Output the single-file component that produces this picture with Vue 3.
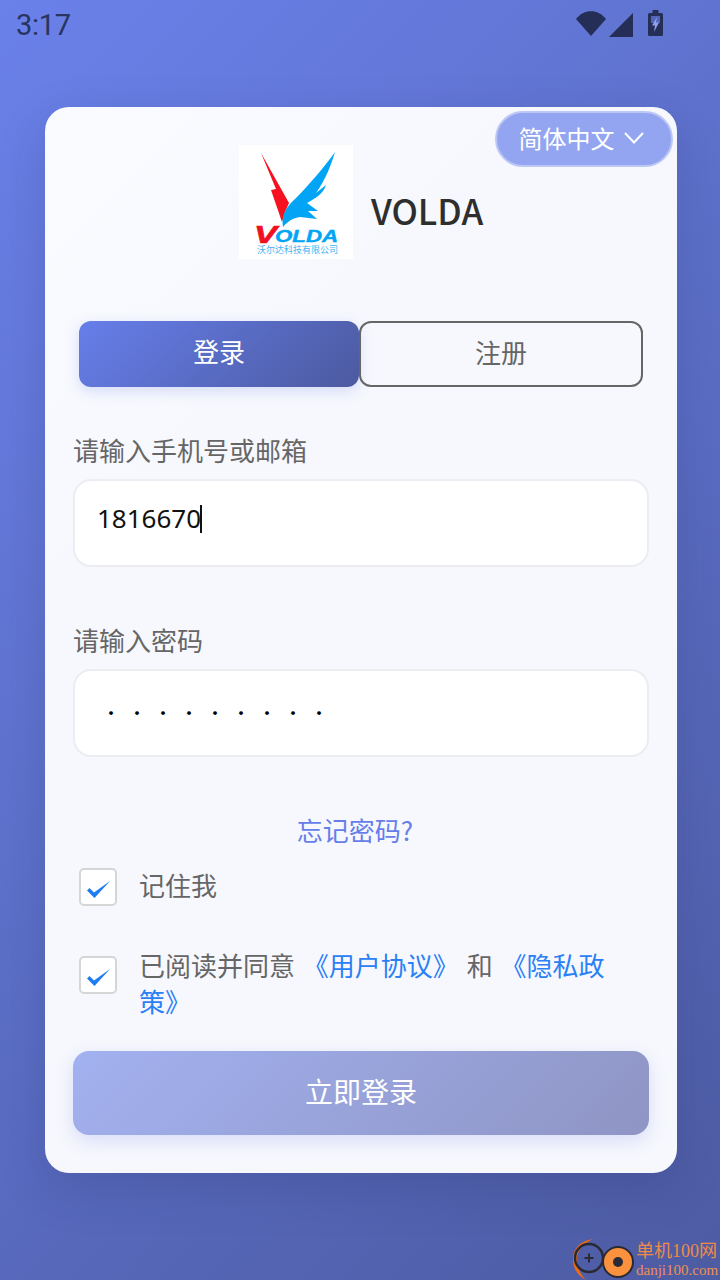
<script setup>
const dots = '·········'
</script>

<template>
  <div class="page">
    <div class="status">
      <span class="time">3:17</span>
      <div class="sysicons">
        <svg class="wifi" width="30" height="25" viewBox="0 0 30 25"><path d="M0 8 C8 -2.500 22 -2.500 30 8 L15 25 Z" fill="#252e57"/></svg>
        <svg class="signal" width="24" height="24" viewBox="0 0 24 24"><path d="M24 0 V24 H0 Z" fill="#252e57"/></svg>
        <svg class="batt" width="15" height="26" viewBox="0 0 15 26"><path d="M4.500 0 H10.500 V3 H13.500 Q15 3 15 4.500 V24.500 Q15 26 13.500 26 H1.500 Q0 26 0 24.500 V4.500 Q0 3 1.500 3 H4.500 Z" fill="#252e57"/><path d="M3 6 H12 V13 H3 Z" fill="#6478d8" opacity=".75"/><path d="M9 7 L4 15.500 H7 L6 22 L11 12.500 H8 Z" fill="#8fa0ee"/></svg>
      </div>
    </div>

    <main class="card">
      <button class="lang">
        <span>简体中文</span>
        <svg width="20" height="12" viewBox="0 0 20 12"><path d="M1 1 L10 10.500 L19 1" fill="none" stroke="#fff" stroke-width="2"/></svg>
      </button>

      <header class="brand">
        <div class="logo">
          <svg width="114" height="114" viewBox="0 0 114 114">
            <path d="M22 8 L50 58 L46 67 L43 77 L32 45 L37 44 Z" fill="#f5111f"/>
            <path d="M96 7 C84 24 68 42 55 55 C47 62 42 71 44 82 C50 75 55 73 61 72 L78 74 L69 66 L79 66 L68 58 C77 53 84 49 87 40 L77 48 C87 34 92 20 96 7 Z" fill="#02a5f5"/>
            <text class="logo-v" x="15" y="98" textLength="23" lengthAdjust="spacingAndGlyphs">V</text>
            <text class="logo-w" x="36" y="97" textLength="63" lengthAdjust="spacingAndGlyphs">OLDA</text>
            <text class="logo-cn" x="18" y="108">沃尔达科技有限公司</text>
          </svg>
        </div>
        <h1>VOLDA</h1>
      </header>

      <div class="tabs">
        <div class="tab active">登录</div>
        <div class="tab">注册</div>
      </div>

      <label class="label">请输入手机号或邮箱</label>
      <div class="field"><span class="value">1816670</span><i class="caret"></i></div>

      <label class="label second">请输入密码</label>
      <div class="field pass"><span class="dots">{{ dots }}</span></div>

      <a class="forgot">忘记密码?</a>

      <div class="check remember">
        <span class="box"><svg width="26" height="20" viewBox="0 0 26 20"><path d="M2 11.500 L4.500 9 L9 13.500 L25 2 L9.500 19 Z" fill="#1f7cf2"/></svg></span>
        <span class="txt">记住我</span>
      </div>
      <div class="check agree">
        <span class="box"><svg width="26" height="20" viewBox="0 0 26 20"><path d="M2 11.500 L4.500 9 L9 13.500 L25 2 L9.500 19 Z" fill="#1f7cf2"/></svg></span>
        <span class="txt">已阅读并同意 <a>《用户协议》</a> 和 <a>《隐私政策》</a></span>
      </div>

      <button class="submit">立即登录</button>
    </main>

    <div class="mark">
      <svg width="64" height="42" viewBox="0 0 64 42">
        <path d="M21 1 C8 3 1 11 1 21 C1 31 6 38 14 42 C8 36 5 29 5 21 C5 12 12 5 21 1 Z" fill="#ef6a10"/>
        <circle cx="17" cy="20" r="14" fill="none" stroke="#2a2a35" stroke-width="2.500"/>
        <path d="M12.500 20 H21.500 M17 15.500 V24.500" stroke="#2a2a35" stroke-width="2"/>
        <circle cx="46" cy="24" r="15" fill="#f9913f" stroke="#2a2a35" stroke-width="2"/>
        <circle cx="46" cy="24" r="5" fill="#2a2a35"/>
      </svg>
      <div class="mark-text"><b>单机100网</b><span>danji100.com</span></div>
    </div>
  </div>
</template>

<style>
html, body { margin: 0; }
</style>

<style scoped>
* { box-sizing: border-box; }
.page {
  position: relative;
  width: 720px;
  height: 1280px;
  overflow: hidden;
  background: linear-gradient(135deg, #6a81ea 0%, #4d5ba2 100%);
  font-family: "Noto Sans", "Noto Sans CJK SC", sans-serif;
}
.status {
  height: 50px;
  display: flex;
  justify-content: space-between;
  padding: 7px 57px 0 16px;
}
.time { font: 400 29px/36px Roboto, sans-serif; letter-spacing: -.3px; color: #2a3460; }
.sysicons { display: flex; align-items: flex-start; margin-top: -7px; }
.wifi { margin-top: 11px; }
.signal { margin: 13px 0 0 3px; }
.batt { margin: 10px 0 0 15px; }

.card {
  position: relative;
  width: 632px;
  height: 1066px;
  margin: 57px 0 0 45px;
  padding: 38px 28px 0;
  border-radius: 24px;
  background: linear-gradient(135deg, #fafbff, #f7f8fd 30%);
  box-shadow: 0 16px 48px rgba(30, 40, 90, .18);
}
.lang {
  position: absolute;
  top: 4px;
  right: 4px;
  width: 178px;
  height: 56px;
  display: flex;
  align-items: center;
  justify-content: center;
  gap: 9px;
  border: 2px solid #bcc7f5;
  border-radius: 28px;
  background: #93a5f0;
  color: #fff;
  font: 400 24px/1 "Noto Sans CJK SC", sans-serif;
  padding: 0 6px 2px 0;
}
.brand { display: flex; padding-left: 166px; height: 114px; }
.logo { width: 114px; height: 114px; background: #fff; flex: none; }
.logo svg { display: block; }
.logo-v { font: italic 700 23px "Liberation Sans", sans-serif; fill: #ef1020; stroke: #ef1020; stroke-width: .6px; }
.logo-w { font: italic 700 16px "Liberation Sans", sans-serif; fill: #02a5f5; stroke: #02a5f5; stroke-width: .4px; }
.logo-cn { font: 400 9px "Noto Sans CJK SC", sans-serif; fill: #45b3f2; }
h1 {
  margin: 0 0 0 18px;
  align-self: center;
  padding-top: 14px;
  font: 500 35px/1 "Noto Sans CJK SC", sans-serif;
  color: #2e2e2e;
}

.tabs { display: flex; margin: 62px 6px 0 6px; height: 66px; }
.tab {
  flex: 1;
  display: flex;
  align-items: center;
  justify-content: center;
  border: 2px solid #666;
  border-radius: 12px;
  font: 400 26px/1 "Noto Sans CJK SC", sans-serif;
  color: #666;
  padding-bottom: 4px;
}
.tab.active {
  flex: none;
  width: 280px;
  border: 0;
  color: #fff;
  background: linear-gradient(135deg, #667eea, #4c5aa0);
  box-shadow: 0 4px 14px rgba(102, 126, 234, .25);
  padding-bottom: 6px;
}

.label {
  display: block;
  margin: 44px 0 0 0;
  font: 400 26px/38px "Noto Sans CJK SC", sans-serif;
  color: #666;
}
.label.second { margin-top: 54px; }
.field {
  display: flex;
  align-items: center;
  width: 576px;
  height: 88px;
  margin-top: 10px;
  padding: 0 22px 10px;
  background: #fff;
  border: 2px solid #ebedf3;
  border-radius: 18px;
}
.field.pass { padding-bottom: 2px; }
.value { font: 400 26px/36px "Noto Sans", sans-serif; color: #111; }
.caret { width: 2px; height: 28px; background: #111; margin-top: 2px; margin-left: -1px; }
.dots {
  font: 400 18px/36px "Noto Sans CJK SC", sans-serif;
  letter-spacing: 8px;
  margin-left: 5px;
  color: #000;
}

.forgot {
  display: block;
  text-align: center;
  margin: 54px 12px 0 0;
  font: 400 26px/38px "Noto Sans CJK SC", sans-serif;
  color: #667eea;
}
.check { display: flex; margin-left: 6px; font: 400 26px/36px "Noto Sans CJK SC", sans-serif; color: #666; }
.box {
  flex: none;
  width: 38px;
  height: 38px;
  display: flex;
  align-items: center;
  justify-content: center;
  margin-right: 22px;
  background: #fff;
  border: 2px solid #d6d6d6;
  border-radius: 5px;
  padding-top: 3px;
}
.remember { margin-top: 19px; }
.agree { margin-top: 44px; }
.agree .box { margin-top: 6px; }
.remember .txt { margin-top: -1px; }
.agree .txt { width: 470px; margin-top: -3px; word-spacing: 2px; }
.txt a { color: #2a80f5; }

.submit {
  display: block;
  width: 576px;
  height: 84px;
  margin-top: 32px;
  border: 0;
  border-radius: 16px;
  background: linear-gradient(135deg, #a2b1f0, #8f95c4);
  box-shadow: 0 6px 18px rgba(102, 126, 234, .22);
  color: #fff;
  font: 400 28px/1 "Noto Sans CJK SC", sans-serif;
  padding: 0 0 4px;
}

.mark {
  position: absolute;
  right: 0;
  bottom: 0;
  display: flex;
  align-items: flex-end;
}
.mark-text { display: flex; flex-direction: column; width: 84px; margin-bottom: 2px; }
.mark-text b { font: 400 18px/22px "Liberation Serif", "Noto Sans CJK SC", serif; color: #ef8a4a; white-space: nowrap; }
.mark-text span { font: 400 15px/16px "Liberation Serif", serif; color: #f09050; white-space: nowrap; }
</style>
